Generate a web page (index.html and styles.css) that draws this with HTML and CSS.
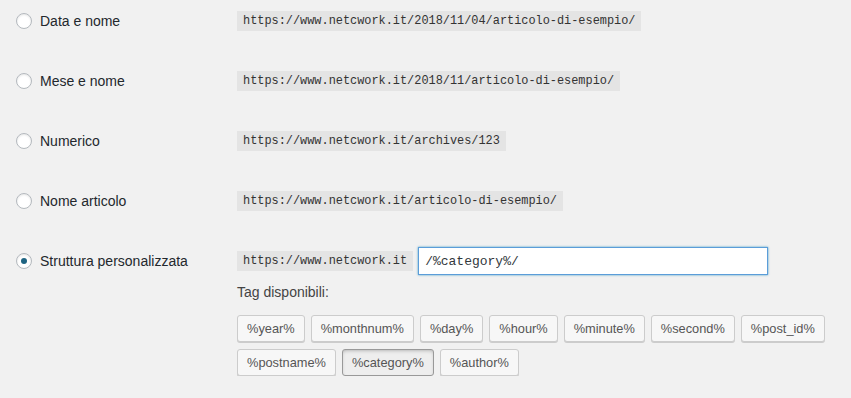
FILE: index.html
```html
<!DOCTYPE html>
<html>
<head>
    <title>Impostazioni permalink</title>
    <link rel="stylesheet" href="styles.css">
</head>
<body>
    <form class="permalinks">
        <div class="row">
            <label class="choice"><input type="radio" name="selection"> Data e nome</label>
            <code>https://www.netcwork.it/2018/11/04/articolo-di-esempio/</code>
        </div>
        <div class="row">
            <label class="choice"><input type="radio" name="selection"> Mese e nome</label>
            <code>https://www.netcwork.it/2018/11/articolo-di-esempio/</code>
        </div>
        <div class="row">
            <label class="choice"><input type="radio" name="selection"> Numerico</label>
            <code>https://www.netcwork.it/archives/123</code>
        </div>
        <div class="row">
            <label class="choice"><input type="radio" name="selection"> Nome articolo</label>
            <code>https://www.netcwork.it/articolo-di-esempio/</code>
        </div>
        <div class="row custom">
            <label class="choice"><input type="radio" name="selection" checked> Struttura personalizzata</label>
            <div class="custom-field">
                <div class="structure">
                    <code>https://www.netcwork.it</code>
                    <input type="text" class="structure-input" name="permalink_structure" value="/%category%/">
                </div>
                <div class="tags-label">Tag disponibili:</div>
                <div class="tags">
                    <button type="button" class="tag">%year%</button>
                    <button type="button" class="tag">%monthnum%</button>
                    <button type="button" class="tag">%day%</button>
                    <button type="button" class="tag">%hour%</button>
                    <button type="button" class="tag">%minute%</button>
                    <button type="button" class="tag">%second%</button>
                    <button type="button" class="tag">%post_id%</button>
                    <button type="button" class="tag">%postname%</button>
                    <button type="button" class="tag active">%category%</button>
                    <button type="button" class="tag">%author%</button>
                </div>
            </div>
        </div>
    </form>
</body>
</html>
```

FILE: styles.css
```css
body {
    margin: 0;
    background: #f1f1f1;
    color: #23282d;
    font-family: "Liberation Sans", Arial, sans-serif;
    font-size: 14px;
}
.permalinks {
    display: flex;
    flex-direction: column;
    gap: 20px;
    padding-left: 16px;
    padding-top: 1px;
}
.row {
    display: flex;
    align-items: center;
    min-height: 40px;
}
.row.custom {
    align-items: flex-start;
    padding-top: 6px;
}
.choice {
    display: flex;
    align-items: center;
    gap: 8px;
    width: 221px;
    flex-shrink: 0;
}
.row.custom .choice {
    margin-top: 6px;
}
input[type="radio"] {
    appearance: none;
    margin: 0;
    width: 16px;
    height: 16px;
    border: 1px solid #b4b9be;
    border-radius: 50%;
    background: #fff;
    box-shadow: inset 0 1px 2px rgba(0, 0, 0, 0.1);
    display: grid;
    place-items: center;
}
input[type="radio"]:checked::before {
    content: "";
    width: 6px;
    height: 6px;
    border-radius: 50%;
    background: #1e6482;
}
code {
    font-family: "Liberation Mono", "DejaVu Sans Mono", monospace;
    font-size: 11.9px;
    line-height: 20px;
    padding: 0 6px;
    background: #e4e4e4;
    color: #333;
}
.custom-field {
    flex: 1;
}
.structure {
    display: flex;
    align-items: center;
    gap: 5px;
}
.structure-input {
    width: 350px;
    height: 28px;
    box-sizing: border-box;
    margin: 0;
    padding: 2px 6px;
    border: 1px solid #5b9dd9;
    box-shadow: 0 0 2px rgba(30, 140, 190, 0.8);
    background: #fff;
    color: #32373c;
    font-family: "Liberation Mono", "DejaVu Sans Mono", monospace;
    font-size: 13px;
    outline: none;
}
.tags-label {
    margin-top: 9px;
    color: #444;
}
.tags {
    display: flex;
    flex-wrap: wrap;
    gap: 7px 6px;
    margin-top: 15px;
}
.tag {
    height: 27px;
    padding: 0 9px;
    border: 1px solid #ccc;
    border-radius: 3px;
    background: #f7f7f7;
    box-shadow: 0 1px 0 #ccc;
    color: #555;
    font-family: "Liberation Sans", Arial, sans-serif;
    font-size: 12.8px;
    cursor: pointer;
}
.tag.active {
    background: #eee;
    border-color: #999;
    box-shadow: inset 0 2px 5px -3px rgba(0, 0, 0, 0.5);
}
```
